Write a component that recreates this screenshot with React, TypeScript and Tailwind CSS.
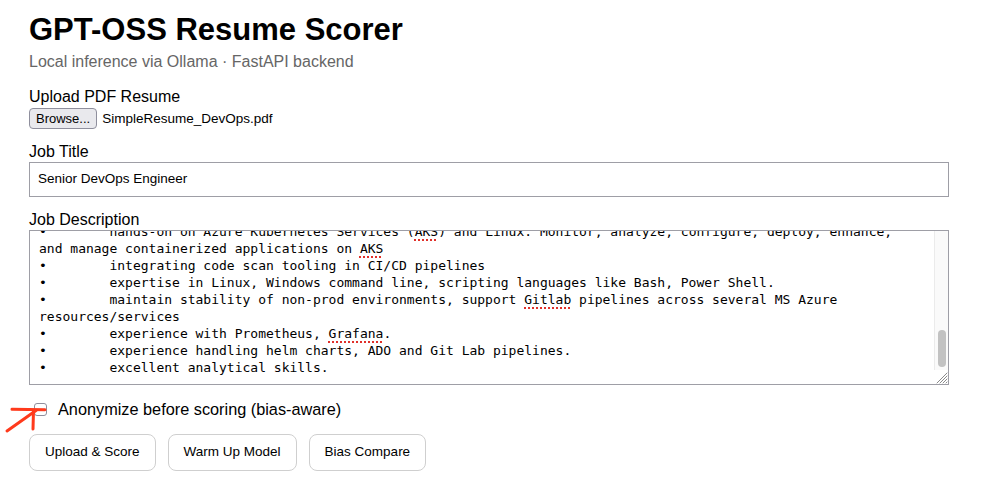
import React, { useEffect, useRef } from "react";

type Seg = string | { w: string };

const lines: Seg[][] = [
  ["About the role:"],
  ["We are looking for a Senior DevOps Engineer to join our cloud platform team. You will"],
  ["work closely with developers, QA and security to build, automate and operate our"],
  ["infrastructure and delivery pipelines."],
  [""],
  ["Responsibilities:"],
  ["•        design, build and maintain CI/CD pipelines using Azure DevOps and GitLab CI."],
  ["•        automate infrastructure provisioning with Terraform and ARM templates."],
  ["•        manage container images, registries and release versioning."],
  ["•        implement monitoring, logging and alerting for production services."],
  ["•        collaborate with development teams on build and deployment best practices."],
  ["•        troubleshoot incidents and perform root cause analysis."],
  ["•        maintain documentation for environments, runbooks and processes."],
  [""],
  ["Requirements:"],
  ["•        5+ years of experience in DevOps, SRE or platform engineering roles."],
  ["•        strong knowledge of cloud platforms, preferably Microsoft Azure."],
  ["•        experience with Docker and container orchestration."],
  ["•        experience with infrastructure as code (Terraform, Ansible)."],
  ["•        good understanding of networking, DNS, load balancers and firewalls."],
  ["•        familiarity with security scanning and secrets management."],
  [
    "•        hands-on on Azure Kubernetes Services (",
    { w: "AKS" },
    ") and Linux. Monitor, analyze, configure, deploy, enhance,",
  ],
  ["and manage containerized applications on ", { w: "AKS" }],
  ["•        integrating code scan tooling in CI/CD pipelines"],
  ["•        expertise in Linux, Windows command line, scripting languages like Bash, Power Shell."],
  [
    "•        maintain stability of non-prod environments, support ",
    { w: "Gitlab" },
    " pipelines across several MS Azure",
  ],
  ["resources/services"],
  ["•        experience with Prometheus, ", { w: "Grafana" }, "."],
  ["•        experience handling helm charts, ADO and Git Lab pipelines."],
  ["•        excellent analytical skills."],
];

function Description() {
  const ref = useRef<HTMLDivElement>(null);
  useEffect(() => {
    const el = ref.current;
    if (el) el.scrollTop = el.scrollHeight;
  }, []);
  return (
    <div className="w-[920px] h-[155px] flex border border-[#9e9ea6] bg-white">
      <div
        ref={ref}
        className="flex-1 min-w-0 overflow-hidden pl-[9px] pr-[6px] pt-[8px] pb-[8px] font-['DejaVu_Sans_Mono',monospace] text-[13px] leading-[17px] text-black whitespace-pre-wrap"
      >
        {lines.map((segs, i) => (
          <div key={i} className="min-h-[17px]">
            {segs.map((s, j) =>
              typeof s === "string" ? (
                <React.Fragment key={j}>{s}</React.Fragment>
              ) : (
                <span
                  key={j}
                  className="underline decoration-dotted decoration-[#e0302a] decoration-[2px] underline-offset-[3px]"
                >
                  {s.w}
                </span>
              )
            )}
          </div>
        ))}
      </div>
      <div className="w-[14px] flex flex-col">
        <div className="flex-1 flex flex-col justify-end items-center pb-[3px] bg-[#fafafa] border-l border-[#ebebeb]">
          <div className="w-[8px] h-[37px] rounded-full bg-[#c2c2c2]" />
        </div>
        <div className="h-[14px] bg-white">
          <svg width="14" height="14" viewBox="0 0 14 14">
            <g stroke="#8a8a8a" strokeWidth="1" strokeLinecap="round">
              <path d="M13 3 L3 13" />
              <path d="M13 6 L6 13" />
              <path d="M13 9 L9 13" />
              <path d="M13 12 L12 13" />
            </g>
          </svg>
        </div>
      </div>
    </div>
  );
}

export default function App() {
  return (
    <div className="relative w-[990px] h-[488px] overflow-hidden bg-white font-['Liberation_Sans',Arial,sans-serif] text-black">
      <div className="flex flex-col pl-[29px]">
        <h1 className="mt-[12px] text-[31px] leading-[36px] font-bold text-black">
          GPT-OSS Resume Scorer
        </h1>
        <p className="mt-[4px] text-[16px] leading-[20px] text-[#666666]">
          Local inference via Ollama · FastAPI backend
        </p>

        <label className="mt-[15px] text-[16px] leading-[20px]">Upload PDF Resume</label>
        <div className="mt-[1px] flex items-center gap-[5px]">
          <button className="h-[21px] px-[6px] rounded-[4px] border border-[#8f8f9d] bg-[#e9e9ed] text-[13px] leading-[19px] text-black">
            Browse...
          </button>
          <span className="text-[13.5px] leading-[19px]">SimpleResume_DevOps.pdf</span>
        </div>

        <label className="mt-[13px] text-[16px] leading-[20px]">Job Title</label>
        <div className="w-[920px] h-[35px] border border-[#9e9ea6] bg-white flex items-center pl-[8px] text-[13.5px]">
          Senior DevOps Engineer
        </div>

        <label className="mt-[13px] text-[16px] leading-[20px]">Job Description</label>
        <Description />

        <div className="mt-[14px] flex items-center h-[20px]">
          <span className="ml-[5px] w-[13px] h-[13px] rounded-[3px] border border-[#8f8f9d] bg-white" />
          <span className="ml-[11px] text-[16.3px] leading-[20px]">
            Anonymize before scoring (bias-aware)
          </span>
        </div>

        <div className="mt-[15px] flex gap-[12px]">
          <button className="h-[37px] px-[15px] rounded-[8px] border border-[#cfcfcf] bg-white text-[13.5px] text-black">
            Upload &amp; Score
          </button>
          <button className="h-[37px] px-[15px] rounded-[8px] border border-[#cfcfcf] bg-white text-[13.5px] text-black">
            Warm Up Model
          </button>
          <button className="h-[37px] px-[15px] rounded-[8px] border border-[#cfcfcf] bg-white text-[13.5px] text-black">
            Bias Compare
          </button>
        </div>
      </div>

      <svg
        className="absolute left-0 top-[400px] pointer-events-none"
        width="50"
        height="40"
        viewBox="0 0 50 40"
      >
        <g stroke="#ff3a1c" strokeWidth="3" strokeLinecap="round" fill="none">
          <path d="M12 9.2 L45 9.8" />
          <path d="M33.5 10.5 L33 29" />
          <path d="M7 31 L36 10.5" />
        </g>
      </svg>
    </div>
  );
}
